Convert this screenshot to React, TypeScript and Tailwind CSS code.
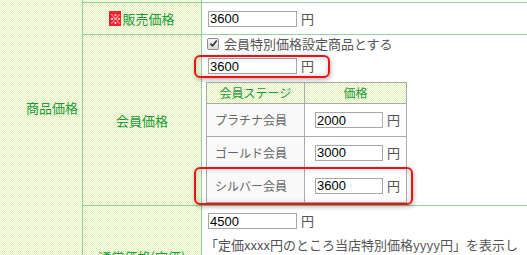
const pattern =
  "bg-[image:repeating-conic-gradient(#ddf2b4_0_25%,#fdfff6_0_50%)] bg-[length:2px_2px]";

const jp = "font-['Noto_Sans_CJK_JP','Noto_Sans',sans-serif]";

function PriceInput({ value, width = "w-[89px]" }: { value: string; width?: string }) {
  return (
    <input
      readOnly
      value={value}
      className={`h-[16px] ${width} border border-[#a7a7a7] bg-white px-[1px] font-['Liberation_Sans',Arial,sans-serif] text-[13px] leading-[14px] text-black outline-none`}
    />
  );
}

function Yen() {
  return <span className="text-[13px] leading-[16px] text-[#555]">円</span>;
}

function CheckBox() {
  return (
    <span className="inline-flex h-[12px] w-[12px] items-center justify-center rounded-[2px] border border-[#8d8d8d] bg-gradient-to-b from-[#f6f6f6] to-[#d9d9d9]">
      <svg viewBox="0 0 10 10" className="h-[9px] w-[9px]">
        <path d="M1.6 5.2 L4 7.6 L8.6 1.8" fill="none" stroke="#333" strokeWidth="1.8" />
      </svg>
    </span>
  );
}

const stages = [
  { name: "プラチナ会員", price: "2000", h: "h-[33px] border-b" },
  { name: "ゴールド会員", price: "3000", h: "h-[32px] border-b" },
  { name: "シルバー会員", price: "3600", h: "h-[33px]" },
];

export default function App() {
  return (
    <div className={`relative h-[255px] w-[527px] overflow-hidden bg-white ${jp}`}>
      <div className="flex">
        {/* 商品価格 column */}
        <div className={`h-[360px] w-[83px] shrink-0 border-r border-[#8fd3a0] ${pattern}`}>
          <p className="mt-[99px] pr-[4px] text-right text-[13px] leading-[17px] text-[#1b9a35]">商品価格</p>
        </div>

        <div className="flex flex-1 flex-col">
          {/* tail of previous row */}
          <div className="flex h-[3px] border-b border-[#8fd3a0]">
            <div className={`w-[119px] border-r border-[#8fd3a0] ${pattern}`} />
            <div className="flex-1" />
          </div>

          {/* 販売価格 */}
          <div className="flex h-[32px] border-b border-[#8fd3a0]">
            <div className={`flex w-[119px] items-center justify-center border-r border-[#8fd3a0] ${pattern}`}>
              <span className="mr-[1px] inline-flex h-[15px] w-[12px] items-center justify-center overflow-hidden bg-[#f2202a] text-[12px] leading-none text-white">
                ※
              </span>
              <span className="text-[13px] leading-[17px] text-[#1b9a35]">販売価格</span>
            </div>
            <div className="flex flex-1 items-center gap-[4px] pl-[6px]">
              <PriceInput value="3600" />
              <Yen />
            </div>
          </div>

          {/* 会員価格 */}
          <div className="flex h-[171px] border-b border-[#8fd3a0]">
            <div className={`flex w-[119px] items-center justify-center border-r border-[#8fd3a0] ${pattern}`}>
              <span className="text-[13px] leading-[17px] text-[#1b9a35]">会員価格</span>
            </div>
            <div className="flex flex-1 flex-col pl-[4px]">
              <div className="flex h-[17px] items-center gap-[5px] pl-[1px]">
                <CheckBox />
                <span className="text-[13px] leading-[17px] text-[#555]">会員特別価格設定商品とする</span>
              </div>
              <div className="mt-[6px] flex items-center gap-[4px] pl-[2px]">
                <PriceInput value="3600" />
                <Yen />
              </div>
              <div className="mt-[8px] w-[201px] border border-[#a9a9a9]">
                <div className={`flex h-[21px] border-b border-[#a9a9a9] ${pattern}`}>
                  <div className="flex w-[98px] items-center justify-center border-r border-[#a9a9a9] text-[12px] leading-[16px] text-[#1b9a35]">
                    会員ステージ
                  </div>
                  <div className="flex flex-1 items-center justify-center text-[12px] leading-[16px] text-[#1b9a35]">
                    価格
                  </div>
                </div>
                {stages.map((s) => (
                  <div key={s.name} className={`flex ${s.h} border-[#a9a9a9]`}>
                    <div className="flex w-[98px] items-center border-r border-[#a9a9a9] bg-[#f9f9f9] pl-[8px] text-[12px] leading-[16px] text-[#666]">
                      {s.name}
                    </div>
                    <div className="flex flex-1 items-center gap-[4px] bg-white pl-[10px]">
                      <PriceInput value={s.price} width="w-[68px]" />
                      <Yen />
                    </div>
                  </div>
                ))}
              </div>
            </div>
          </div>

          {/* 通常価格(定価) */}
          <div className="flex h-[100px]">
            <div className={`flex w-[119px] items-center justify-center border-r border-[#8fd3a0] ${pattern}`}>
              <span className="text-[13px] leading-[17px] text-[#1b9a35]">通常価格(定価)</span>
            </div>
            <div className="flex flex-1 flex-col pl-[6px] pt-[7px]">
              <div className="flex items-center gap-[4px]">
                <PriceInput value="4500" />
                <Yen />
              </div>
              <p className="ml-[-3px] mt-[7px] whitespace-nowrap text-[13px] leading-[17px] text-[#555]">
                「定価xxxx円のところ当店特別価格yyyy円」を表示し
                <br />
                ます
              </p>
            </div>
          </div>
        </div>
      </div>

      {/* red annotation boxes */}
      <div className="pointer-events-none absolute left-[194px] top-[55px] h-[23px] w-[136px] rounded-[6px] border-2 border-[#ee1111] shadow-[inset_0_0_6px_rgba(0,0,0,0.18),1px_2px_4px_rgba(0,0,0,0.28)]" />
      <div className="pointer-events-none absolute left-[194px] top-[167px] h-[38px] w-[219px] rounded-[6px] border-2 border-[#ee1111] shadow-[inset_0_0_6px_rgba(0,0,0,0.18),1px_2px_4px_rgba(0,0,0,0.28)]" />
    </div>
  );
}
